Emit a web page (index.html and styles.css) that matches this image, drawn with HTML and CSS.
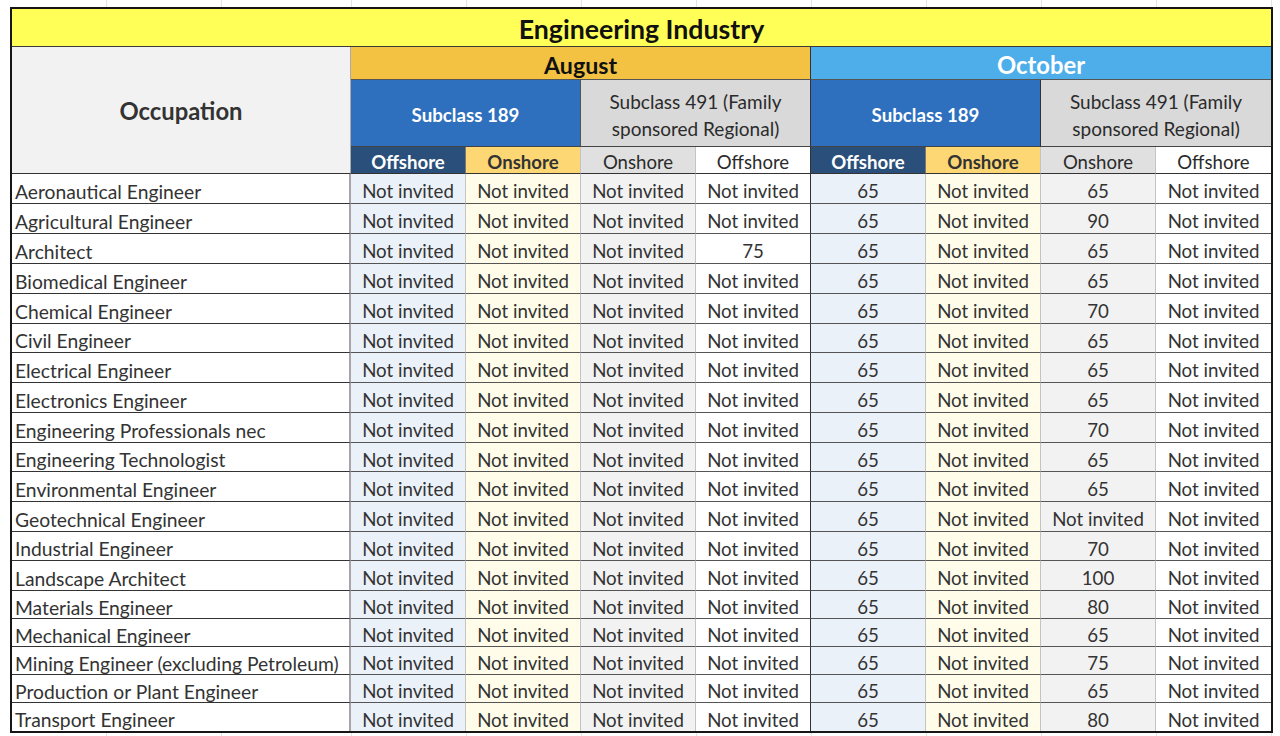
FILE: index.html
```html
<!DOCTYPE html>
<html lang="en">
<head>
<meta charset="utf-8">
<title>Engineering Industry</title>
<link rel="stylesheet" href="styles.css">
</head>
<body>
<div class="sheet">
  <div class="grid">
    <div class="c title">Engineering Industry</div>
    <div class="c occ">Occupation</div>
    <div class="c aug">August</div>
    <div class="c oct">October</div>
    <div class="c s189">Subclass 189</div>
    <div class="c s491">Subclass 491 (Family<br>sponsored Regional)</div>
    <div class="c s189 sep">Subclass 189</div>
    <div class="c s491 last">Subclass 491 (Family<br>sponsored Regional)</div>
    <div class="c hoff">Offshore</div>
    <div class="c hon">Onshore</div>
    <div class="c hon2">Onshore</div>
    <div class="c hoff2 sep">Offshore</div>
    <div class="c hoff">Offshore</div>
    <div class="c hon">Onshore</div>
    <div class="c hon2">Onshore</div>
    <div class="c hoff2 last">Offshore</div>

    <div class="c name">Aeronautical Engineer</div><div class="c b">Not invited</div><div class="c y">Not invited</div><div class="c g">Not invited</div><div class="c w sep">Not invited</div><div class="c b">65</div><div class="c y">Not invited</div><div class="c g">65</div><div class="c w last">Not invited</div>
    <div class="c name">Agricultural Engineer</div><div class="c b">Not invited</div><div class="c y">Not invited</div><div class="c g">Not invited</div><div class="c w sep">Not invited</div><div class="c b">65</div><div class="c y">Not invited</div><div class="c g">90</div><div class="c w last">Not invited</div>
    <div class="c name">Architect</div><div class="c b">Not invited</div><div class="c y">Not invited</div><div class="c g">Not invited</div><div class="c w sep">75</div><div class="c b">65</div><div class="c y">Not invited</div><div class="c g">65</div><div class="c w last">Not invited</div>
    <div class="c name">Biomedical Engineer</div><div class="c b">Not invited</div><div class="c y">Not invited</div><div class="c g">Not invited</div><div class="c w sep">Not invited</div><div class="c b">65</div><div class="c y">Not invited</div><div class="c g">65</div><div class="c w last">Not invited</div>
    <div class="c name">Chemical Engineer</div><div class="c b">Not invited</div><div class="c y">Not invited</div><div class="c g">Not invited</div><div class="c w sep">Not invited</div><div class="c b">65</div><div class="c y">Not invited</div><div class="c g">70</div><div class="c w last">Not invited</div>
    <div class="c name">Civil Engineer</div><div class="c b">Not invited</div><div class="c y">Not invited</div><div class="c g">Not invited</div><div class="c w sep">Not invited</div><div class="c b">65</div><div class="c y">Not invited</div><div class="c g">65</div><div class="c w last">Not invited</div>
    <div class="c name">Electrical Engineer</div><div class="c b">Not invited</div><div class="c y">Not invited</div><div class="c g">Not invited</div><div class="c w sep">Not invited</div><div class="c b">65</div><div class="c y">Not invited</div><div class="c g">65</div><div class="c w last">Not invited</div>
    <div class="c name">Electronics Engineer</div><div class="c b">Not invited</div><div class="c y">Not invited</div><div class="c g">Not invited</div><div class="c w sep">Not invited</div><div class="c b">65</div><div class="c y">Not invited</div><div class="c g">65</div><div class="c w last">Not invited</div>
    <div class="c name">Engineering Professionals nec</div><div class="c b">Not invited</div><div class="c y">Not invited</div><div class="c g">Not invited</div><div class="c w sep">Not invited</div><div class="c b">65</div><div class="c y">Not invited</div><div class="c g">70</div><div class="c w last">Not invited</div>
    <div class="c name">Engineering Technologist</div><div class="c b">Not invited</div><div class="c y">Not invited</div><div class="c g">Not invited</div><div class="c w sep">Not invited</div><div class="c b">65</div><div class="c y">Not invited</div><div class="c g">65</div><div class="c w last">Not invited</div>
    <div class="c name">Environmental Engineer</div><div class="c b">Not invited</div><div class="c y">Not invited</div><div class="c g">Not invited</div><div class="c w sep">Not invited</div><div class="c b">65</div><div class="c y">Not invited</div><div class="c g">65</div><div class="c w last">Not invited</div>
    <div class="c name">Geotechnical Engineer</div><div class="c b">Not invited</div><div class="c y">Not invited</div><div class="c g">Not invited</div><div class="c w sep">Not invited</div><div class="c b">65</div><div class="c y">Not invited</div><div class="c g">Not invited</div><div class="c w last">Not invited</div>
    <div class="c name">Industrial Engineer</div><div class="c b">Not invited</div><div class="c y">Not invited</div><div class="c g">Not invited</div><div class="c w sep">Not invited</div><div class="c b">65</div><div class="c y">Not invited</div><div class="c g">70</div><div class="c w last">Not invited</div>
    <div class="c name">Landscape Architect</div><div class="c b">Not invited</div><div class="c y">Not invited</div><div class="c g">Not invited</div><div class="c w sep">Not invited</div><div class="c b">65</div><div class="c y">Not invited</div><div class="c g">100</div><div class="c w last">Not invited</div>
    <div class="c name">Materials Engineer</div><div class="c b">Not invited</div><div class="c y">Not invited</div><div class="c g">Not invited</div><div class="c w sep">Not invited</div><div class="c b">65</div><div class="c y">Not invited</div><div class="c g">80</div><div class="c w last">Not invited</div>
    <div class="c name">Mechanical Engineer</div><div class="c b">Not invited</div><div class="c y">Not invited</div><div class="c g">Not invited</div><div class="c w sep">Not invited</div><div class="c b">65</div><div class="c y">Not invited</div><div class="c g">65</div><div class="c w last">Not invited</div>
    <div class="c name">Mining Engineer (excluding Petroleum)</div><div class="c b">Not invited</div><div class="c y">Not invited</div><div class="c g">Not invited</div><div class="c w sep">Not invited</div><div class="c b">65</div><div class="c y">Not invited</div><div class="c g">75</div><div class="c w last">Not invited</div>
    <div class="c name">Production or Plant Engineer</div><div class="c b">Not invited</div><div class="c y">Not invited</div><div class="c g">Not invited</div><div class="c w sep">Not invited</div><div class="c b">65</div><div class="c y">Not invited</div><div class="c g">65</div><div class="c w last">Not invited</div>
    <div class="c name bottom">Transport Engineer</div><div class="c b bottom">Not invited</div><div class="c y bottom">Not invited</div><div class="c g bottom">Not invited</div><div class="c w sep bottom">Not invited</div><div class="c b bottom">65</div><div class="c y bottom">Not invited</div><div class="c g bottom">80</div><div class="c w last bottom">Not invited</div>
  </div>
</div>
</body>
</html>
```
FILE: styles.css
```css
html, body {
  margin: 0;
  padding: 0;
}
body {
  width: 1280px;
  height: 736px;
  overflow: hidden;
  background-color: #fff;
  background-image: repeating-linear-gradient(to right, transparent 0 114px, #e4e4e4 114px 115px);
  background-position: 237px 0;
  font-family: Lato, "Open Sans", sans-serif;
}
.sheet {
  padding: 7px 0 0 10px;
}
.grid {
  display: grid;
  width: 1259px;
  border: 2px solid #161616;
  background: #fff;
  grid-template-columns: 339px repeat(8, 115px);
  grid-template-rows: 38px 33px 67px 27px 30px 30px 30px 30px 30px 29px 30px 30px 30px 29px 30px 30px 29px 30px 28px 28px 28px 28px 28px;
}
.c {
  box-sizing: border-box;
  display: flex;
  align-items: center;
  justify-content: center;
  border-right: 1px solid #c4c4c4;
  border-bottom: 1px solid #555;
  font-size: 18.7px;
  color: #333;
  white-space: nowrap;
  padding-top: 5px;
}
.c.last { border-right: none; }
.c.sep { border-right: 1px solid #333; }
.c.bottom { border-bottom: none; }

.title {
  grid-column: 1 / -1;
  background: #ffff57;
  color: #111;
  font-weight: 700;
  font-size: 26.7px;
  border-right: none;
  border-bottom: 1px solid #3a3a3a;
  padding-top: 3px;
}
.occ {
  grid-row: 2 / 5;
  background: #f2f2f2;
  color: #333;
  font-weight: 700;
  font-size: 23.8px;
  border-right: 1px solid #aaa;
  border-bottom: 1px solid #333;
  padding-top: 2px;
}
.aug {
  grid-column: 2 / 6;
  background: #f4c243;
  color: #111;
  font-weight: 700;
  font-size: 23.2px;
  border-right: 1px solid #333;
  border-bottom: 1px solid #555;
  padding-top: 4px;
}
.oct {
  grid-column: 6 / 10;
  background: #4daeea;
  color: #fff;
  font-weight: 700;
  font-size: 23.8px;
  border-right: none;
  border-bottom: 1px solid #555;
  padding-top: 4px;
}
.s189 {
  grid-column: span 2;
  background: #2e70be;
  color: #fff;
  font-weight: 700;
  font-size: 18.7px;
  border-right: 1px solid #555;
  border-bottom: 1px solid #444;
  padding-top: 4px;
}
.s491 {
  grid-column: span 2;
  background: #d9d9d9;
  color: #2b2b2b;
  font-size: 19px;
  line-height: 27px;
  text-align: center;
  border-right: 1px solid #333;
  border-bottom: 1px solid #444;
  padding-top: 4px;
}
.hoff, .hon, .hon2, .hoff2 {
  font-size: 18.6px;
  padding-top: 3px;
  border-bottom: 1px solid #333;
}
.hoff { background: #2a4f7a; color: #fff; font-weight: 700; border-right: 1px solid #777; }
.hon { background: #fcd774; color: #333; font-weight: 700; }
.hon2 { background: #e0e0e0; color: #2b2b2b; }
.hoff2 { background: #fff; color: #2b2b2b; }

.name {
  justify-content: flex-start;
  padding-left: 3px;
  font-size: 19.3px;
  border-right: 2px solid #a6a6a6;
  border-bottom: 1px solid #333;
}
.b { background: #ebf1f9; }
.y { background: #fffde9; }
.g { background: #f2f2f2; }
.w { background: #fff; }
```
